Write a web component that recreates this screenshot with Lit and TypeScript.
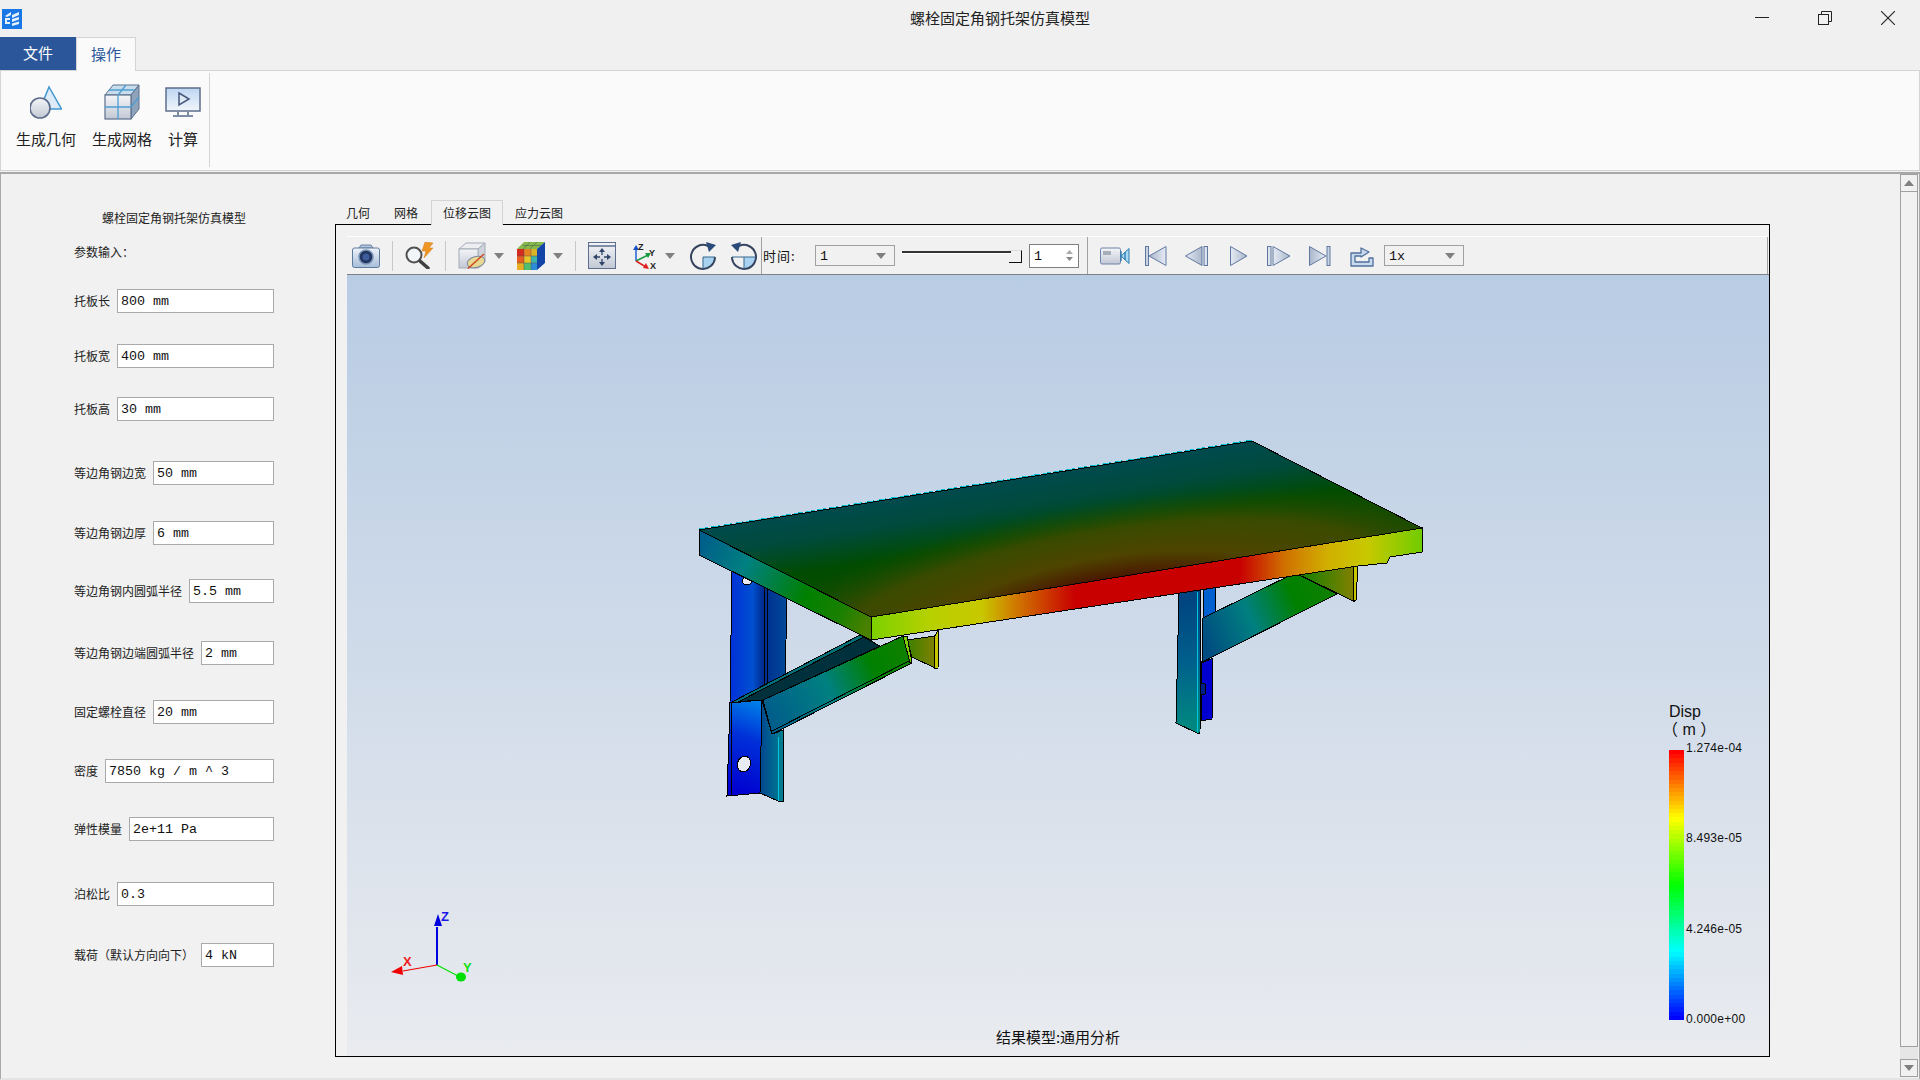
import { LitElement, html, css, svg } from "lit";
import { customElement } from "lit/decorators.js";

interface Param { label: string; value: string; gap: number; }

const PARAMS: Param[] = [
  { label: "托板长", value: "800 mm", gap: 29 },
  { label: "托板宽", value: "400 mm", gap: 31 },
  { label: "托板高", value: "30 mm", gap: 29 },
  { label: "等边角钢边宽", value: "50 mm", gap: 40 },
  { label: "等边角钢边厚", value: "6 mm", gap: 36 },
  { label: "等边角钢内圆弧半径", value: "5.5 mm", gap: 34 },
  { label: "等边角钢边端圆弧半径", value: "2 mm", gap: 38 },
  { label: "固定螺栓直径", value: "20 mm", gap: 35 },
  { label: "密度", value: "7850 kg / m ^ 3", gap: 35 },
  { label: "弹性模量", value: "2e+11 Pa", gap: 34 },
  { label: "泊松比", value: "0.3", gap: 41 },
  { label: "载荷（默认方向向下）", value: "4 kN", gap: 37 },
];

function jet(t: number): string {
  const stops: [number, number[]][] = [
    [0, [0, 0, 255]], [0.25, [0, 255, 255]], [0.5, [0, 255, 0]], [0.75, [255, 255, 0]], [1, [255, 0, 0]],
  ];
  for (let i = 0; i < stops.length - 1; i++) {
    const [a, ca] = stops[i];
    const [b, cb] = stops[i + 1];
    if (t <= b) {
      const f = (t - a) / (b - a);
      const c = ca.map((v, k) => Math.round(v + (cb[k] - v) * f));
      return `rgb(${c[0]},${c[1]},${c[2]})`;
    }
  }
  return "rgb(255,0,0)";
}

const BANDS = 64;
const barGradient = (() => {
  const parts: string[] = [];
  for (let i = 0; i < BANDS; i++) {
    const t = 1 - i / (BANDS - 1);
    parts.push(`${jet(t)} ${(i / BANDS) * 100}% ${((i + 1) / BANDS) * 100}%`);
  }
  return `linear-gradient(to bottom, ${parts.join(",")})`;
})();

const sharedDefs = svg`
  <linearGradient id="gBlue" x1="0" y1="0" x2="0" y2="1"><stop offset="0" stop-color="#eef3f9"/><stop offset="1" stop-color="#a6bcd8"/></linearGradient>
  <linearGradient id="gGray" x1="0" y1="0" x2="0" y2="1"><stop offset="0" stop-color="#f4f5f8"/><stop offset="1" stop-color="#c2c8d4"/></linearGradient>
  <linearGradient id="gTri" x1="0" y1="0" x2="1" y2="0"><stop offset="0" stop-color="#e6ecf5"/><stop offset="1" stop-color="#a9b6cb"/></linearGradient>
  <linearGradient id="gTriR" x1="1" y1="0" x2="0" y2="0"><stop offset="0" stop-color="#e6ecf5"/><stop offset="1" stop-color="#a9b6cb"/></linearGradient>
  <linearGradient id="gScreen" x1="0" y1="0" x2="0" y2="1"><stop offset="0" stop-color="#bcd6f2"/><stop offset="1" stop-color="#f2f6fb"/></linearGradient>
`;

const icons = {
  geometry: html`<svg width="32" height="34" viewBox="0 0 32 34">
    <path d="M19 2 L31.500 24 L10 24 Z" fill="#dcebf7" stroke="#3f98cf" stroke-width="1.500"/>
    <circle cx="10" cy="23" r="10" fill="url(#gGray)" stroke="#5a6a88" stroke-width="1.600"/>
  </svg>`,
  mesh: html`<svg width="36" height="36" viewBox="0 0 36 36">
    <path d="M1 11 L9 1 L35 1 L27 11 Z" fill="#c9dcec" stroke="#5c708c"/>
    <path d="M27 11 L35 1 L35 25 L27 35 Z" fill="#8ea2ba" stroke="#5c708c"/>
    <rect x="1" y="11" width="26" height="24" fill="url(#gGray)" stroke="#5c708c" stroke-width="1.200"/>
    <path d="M14 11 V35 M1 23 H27 M14 11 L22 1 M5 6 H31 M27 23 L35 13" stroke="#4f9fd4" stroke-width="1.300" fill="none"/>
  </svg>`,
  calc: html`<svg width="36" height="30" viewBox="0 0 36 30">
    <rect x="1" y="1" width="34" height="23" fill="url(#gScreen)" stroke="#5c6e8c" stroke-width="1.500"/>
    <path d="M14 6 L24 12 L14 18 Z" fill="#dfe9f5" stroke="#46587c" stroke-width="1.500"/>
    <path d="M13 24 V28 M23 24 V28" stroke="#7d8ba3" stroke-width="2"/>
    <path d="M8 29 H28" stroke="#56688a" stroke-width="1.500"/>
  </svg>`,
  camera: html`<svg width="28" height="24" viewBox="0 0 28 24">
    <path d="M7 4 L9 1 H19 L21 4 Z" fill="#b4c6dc" stroke="#6a83a6"/>
    <rect x="0.500" y="4" width="27" height="19.500" rx="2" fill="url(#gBlue)" stroke="#5d7a9c"/>
    <circle cx="14" cy="13" r="7" fill="#22355e" stroke="#7a93b8" stroke-width="1.500"/>
    <circle cx="14" cy="13" r="3.500" fill="#3c5c9c"/>
  </svg>`,
  search: html`<svg width="30" height="27" viewBox="0 0 30 27">
    <path d="M21 0 L29 1 L25 6 L29 6 L20 16 L22 9 L18 9 Z" fill="#ef9524" stroke="#d07a18" stroke-width=".5"/>
    <circle cx="10" cy="13" r="7.500" fill="#f2f5f8" stroke="#505050" stroke-width="2"/>
    <path d="M16 19 L24 26" stroke="#404040" stroke-width="3.500" stroke-linecap="round"/>
  </svg>`,
  cube: html`<svg width="28" height="27" viewBox="0 0 28 27">
    <path d="M1 7 L8 1 L27 1 L20 7 Z" fill="#eceef2" stroke="#a4acb8"/>
    <path d="M20 7 L27 1 L27 20 L20 26 Z" fill="#cfd4dc" stroke="#a4acb8"/>
    <rect x="1" y="7" width="19" height="19" fill="url(#gGray)" stroke="#a4acb8"/>
    <ellipse cx="18" cy="20" rx="9" ry="5.500" transform="rotate(-15 18 20)" fill="#e9d892" stroke="#7c8aa0"/>
    <path d="M10 26.500 L26 12" stroke="#d04a22" stroke-width="1.500"/>
  </svg>`,
  rainbow: html`<svg width="28" height="28" viewBox="0 0 28 28">
    <path d="M0 7 L7 0 L28 0 L20 7 Z" fill="#86b84a"/>
    <path d="M6 3.500 H24 M13 0 L6.500 7 M20 0 L13 7" stroke="#4a6a50" stroke-width=".6"/>
    <path d="M20 7 L28 0 L28 21 L20 28 Z" fill="#1544a8"/>
    <rect x="0" y="7" width="7" height="7" fill="#d42a20"/><rect x="7" y="7" width="7" height="7" fill="#e88420"/><rect x="14" y="7" width="6" height="7" fill="#dcb428"/>
    <rect x="0" y="14" width="7" height="7" fill="#e85c20"/><rect x="7" y="14" width="7" height="7" fill="#e8c828"/><rect x="14" y="14" width="6" height="7" fill="#3cb4a8"/>
    <rect x="0" y="21" width="7" height="7" fill="#e8b020"/><rect x="7" y="21" width="7" height="7" fill="#50c070"/><rect x="14" y="21" width="6" height="7" fill="#2c8cd8"/>
    <path d="M7 7 V28 M14 7 V28 M0 14 H20 M0 21 H20" stroke="#5a5a50" stroke-width=".5"/>
  </svg>`,
  caret: html`<svg width="10" height="6" viewBox="0 0 10 6"><path d="M0 0 H10 L5 6 Z" fill="#808080"/></svg>`,
  fit: html`<svg width="28" height="27" viewBox="0 0 28 27">
    <rect x=".5" y=".5" width="27" height="26" fill="url(#gGray)" stroke="#5d6f8c"/>
    <path d="M.5 4 H27.500" stroke="#5d6f8c" stroke-width="1.500"/>
    <g fill="#2f4468">
      <path d="M14 6 L17 10 H11 Z"/><path d="M14 24 L17 20 H11 Z"/><path d="M5 15 L9 12 V18 Z"/><path d="M23 15 L19 12 V18 Z"/>
    </g>
    <path d="M14 10 V13 M14 17 V20 M9 15 H12 M16 15 H19" stroke="#2f4468" stroke-width="1.300"/>
  </svg>`,
  axes: html`<svg width="28" height="28" viewBox="0 0 28 28">
    <path d="M3 19 V6" stroke="#2060d8" stroke-width="1.500"/><path d="M3 3 L6 8 H0 Z" fill="#1850c8"/>
    <path d="M3 19 L15 13" stroke="#1a9a40" stroke-width="1.500"/><path d="M18 11 L12 11 L15 16 Z" fill="#1a9a40"/>
    <path d="M3 19 L13 25" stroke="#e02020" stroke-width="1.500"/><path d="M16 27 L10 26 L13 21 Z" fill="#e02020"/>
    <text x="5" y="8" class="ax">Z</text><text x="16" y="14" class="ax">Y</text><text x="17" y="27" class="ax">X</text>
  </svg>`,
  cw: html`<svg width="28" height="28" viewBox="0 0 28 28">
    <path d="M14 15 H26 A12 12 0 0 1 14 27 Z" fill="#a9d2f0"/>
    <path d="M19 4 A12 12 0 1 0 26 15" fill="none" stroke="#34435e" stroke-width="2"/>
    <path d="M14 15 H26 M14 15 V27" stroke="#34698f" stroke-width="1"/>
    <path d="M17 0 L27 3 L20 10 Z" fill="#2a4a78"/>
  </svg>`,
  ccw: html`<svg width="28" height="28" viewBox="0 0 28 28">
    <path d="M14 15 H26 A12 12 0 0 1 14 27 Z" fill="#a9d2f0"/>
    <path d="M9 4 A12 12 0 1 1 2 15" fill="none" stroke="#34435e" stroke-width="2"/>
    <path d="M2 15 H26 M14 15 V27" stroke="#34698f" stroke-width="1"/>
    <path d="M11 0 L1 3 L8 10 Z" fill="#2a4a78"/>
  </svg>`,
  video: html`<svg width="30" height="18" viewBox="0 0 30 18">
    <rect x=".5" y="1" width="20" height="16" rx="1.500" fill="url(#gGray)" stroke="#6d85a8"/>
    <rect x="3" y="4" width="8" height="4" fill="#a8aeb8"/>
    <path d="M21 9 L29 1.500 V16.500 Z" fill="#a8d8f4" stroke="#2a78b0"/>
    <path d="M21 4 V14 M25 5 V13" stroke="#2a78b0" stroke-width="1.300"/>
  </svg>`,
  first: html`<svg width="22" height="20" viewBox="0 0 22 20">
    <rect x=".5" y=".5" width="3" height="19" fill="#c8d4e4" stroke="#6078a0"/>
    <path d="M21 .5 V19.500 L4 10 Z" fill="url(#gTriR)" stroke="#6078a0"/>
  </svg>`,
  prev: html`<svg width="23" height="20" viewBox="0 0 23 20">
    <path d="M17 .5 V19.500 L.5 10 Z" fill="url(#gTri)" stroke="#6078a0"/>
    <rect x="19" y=".5" width="3.500" height="19" fill="#dbe3ee" stroke="#6078a0"/>
  </svg>`,
  play: html`<svg width="18" height="20" viewBox="0 0 18 20"><path d="M.5 .5 V19.500 L17 10 Z" fill="url(#gTri)" stroke="#6078a0"/></svg>`,
  next: html`<svg width="24" height="20" viewBox="0 0 24 20">
    <rect x=".5" y=".5" width="3.500" height="19" fill="#dbe3ee" stroke="#6078a0"/>
    <path d="M6 .5 V19.500 L23 10 Z" fill="url(#gTri)" stroke="#6078a0"/>
  </svg>`,
  last: html`<svg width="22" height="20" viewBox="0 0 22 20">
    <path d="M.5 .5 V19.500 L17 10 Z" fill="url(#gTriR)" stroke="#6078a0"/>
    <rect x="18" y=".5" width="3" height="19" fill="#c8d4e4" stroke="#6078a0"/>
  </svg>`,
  exportIcon: html`<svg width="24" height="22" viewBox="0 0 24 22">
    <path d="M1 8 H11 V3 L19 7 L11 12 V11 H5 V17 H19 V13 H23 V21 H1 Z" fill="#c8daee" stroke="#4f6f9c" stroke-width="1.300" stroke-linejoin="round"/>
  </svg>`,
};

const modelDefs = svg`
  <linearGradient id="mFront" gradientUnits="userSpaceOnUse" x1="871" y1="0" x2="1422" y2="0">
    <stop offset="0" stop-color="#7cd000"/><stop offset=".11" stop-color="#b8d000"/><stop offset=".2" stop-color="#c8c800"/>
    <stop offset=".26" stop-color="#d07c00"/><stop offset=".32" stop-color="#cc3800"/><stop offset=".37" stop-color="#c80000"/>
    <stop offset=".67" stop-color="#c80000"/><stop offset=".75" stop-color="#d07000"/><stop offset=".83" stop-color="#d0b000"/>
    <stop offset=".9" stop-color="#c8c800"/><stop offset="1" stop-color="#70cc00"/>
  </linearGradient>
  <linearGradient id="mLeft" gradientUnits="userSpaceOnUse" x1="699" y1="530" x2="871" y2="617">
    <stop offset="0" stop-color="#005a8c"/><stop offset=".3" stop-color="#008080"/><stop offset=".65" stop-color="#008000"/><stop offset=".85" stop-color="#1a8000"/><stop offset="1" stop-color="#4a8000"/>
  </linearGradient>
  <linearGradient id="mTop" gradientUnits="userSpaceOnUse" x1="965" y1="475" x2="985" y2="605">
    <stop offset="0" stop-color="#004a55"/><stop offset=".3" stop-color="#004a3c"/><stop offset=".55" stop-color="#004c00"/><stop offset="1" stop-color="#144c00"/>
  </linearGradient>
  <radialGradient id="mHot" gradientUnits="objectBoundingBox" cx=".5" cy=".5" r=".5">
    <stop offset="0" stop-color="#4a0000"/><stop offset=".2" stop-color="#4a1000"/><stop offset=".45" stop-color="#4e4400"/>
    <stop offset=".72" stop-color="#4a4a00" stop-opacity=".75"/><stop offset="1" stop-color="#204c00" stop-opacity="0"/>
  </radialGradient>
  <linearGradient id="mBraceL" gradientUnits="userSpaceOnUse" x1="763" y1="720" x2="910" y2="650">
    <stop offset="0" stop-color="#005a8c"/><stop offset=".45" stop-color="#008080"/><stop offset=".75" stop-color="#008000"/><stop offset="1" stop-color="#108000"/>
  </linearGradient>
  <linearGradient id="mBraceR" gradientUnits="userSpaceOnUse" x1="1203" y1="640" x2="1330" y2="585">
    <stop offset="0" stop-color="#004c80"/><stop offset=".38" stop-color="#008080"/><stop offset=".72" stop-color="#008000"/><stop offset="1" stop-color="#108000"/>
  </linearGradient>
  <linearGradient id="mGussetL" gradientUnits="userSpaceOnUse" x1="907" y1="0" x2="935" y2="0">
    <stop offset="0" stop-color="#3c8000"/><stop offset="1" stop-color="#808000"/>
  </linearGradient>
  <linearGradient id="mGussetR" gradientUnits="userSpaceOnUse" x1="1295" y1="0" x2="1353" y2="0">
    <stop offset="0" stop-color="#088000"/><stop offset="1" stop-color="#808000"/>
  </linearGradient>
  <linearGradient id="mPostTop" gradientUnits="userSpaceOnUse" x1="730" y1="0" x2="787" y2="0">
    <stop offset="0" stop-color="#0030d8"/><stop offset=".4" stop-color="#0050d0"/><stop offset=".58" stop-color="#002c90"/><stop offset="1" stop-color="#004a98"/>
  </linearGradient>
  <linearGradient id="mPostLow" gradientUnits="userSpaceOnUse" x1="730" y1="790" x2="765" y2="705">
    <stop offset="0" stop-color="#0000d0"/><stop offset=".6" stop-color="#0030d8"/><stop offset="1" stop-color="#0080e8"/>
  </linearGradient>
  <linearGradient id="mFlange" gradientUnits="userSpaceOnUse" x1="762" y1="0" x2="783" y2="0">
    <stop offset="0" stop-color="#004a90"/><stop offset="1" stop-color="#007f90"/>
  </linearGradient>
  <linearGradient id="mPostR" gradientUnits="userSpaceOnUse" x1="1180" y1="600" x2="1200" y2="725">
    <stop offset="0" stop-color="#004480"/><stop offset=".5" stop-color="#00608c"/><stop offset="1" stop-color="#008880"/>
  </linearGradient>
`;

const model = svg`
  <g stroke="#000" stroke-width="1" shape-rendering="crispEdges" stroke-linejoin="miter">
    <path d="M732 570 L787 598 L786 640 L785 678 L730 703 Z" fill="url(#mPostTop)"/>
    <path d="M764 585 V690 M767 586 V688" fill="none"/>
    <ellipse cx="747" cy="581" rx="5" ry="4" fill="#e8ecf2"/>
    <path d="M730 703 L762 700 L760 793 L727 796 Z" fill="url(#mPostLow)"/>
    <path d="M762 700 L772 734 L783 730 L783 801 L778 801 L760 793 Z" fill="url(#mFlange)"/>
    <path d="M778 737 V801" stroke="#00c8e0" fill="none"/>
    <path d="M731 703 V795" fill="none"/>
    <ellipse cx="744" cy="764" rx="6.500" ry="8" transform="rotate(18 744 764)" fill="#e8ecf2"/>
    <path d="M907 640 L935 636 L935 668 L912 657 Z" fill="url(#mGussetL)"/>
    <path d="M934 637 L939 629 L938 668 L935 669 Z" fill="#c8c800"/>
    <path d="M732 702 L860 635 L880 646 L763 700 Z" fill="#00303c"/>
    <path d="M732 702 L860 635 L864 637 L738 702 Z" fill="#007078"/>
    <path d="M763 700 L903 636 L912 663 L772 734 Z" fill="url(#mBraceL)"/>
    <path d="M772 731 L911 660" fill="none"/>
    <path d="M903 636 L907 636 L912 662 L910 663 Z" fill="#80d000"/>
    <path d="M1203 587 L1216 586 L1215 617 L1203 620 Z" fill="#0060d0"/>
    <path d="M1202 663 L1213 658 L1212 719 L1201 721 Z" fill="#0000d0"/>
    <path d="M1179 592 L1201 588 L1200 733 L1197 733 L1176 723 Z" fill="url(#mPostR)"/>
    <path d="M1197 592 V733" stroke="#00c8e0" fill="none"/>
    <ellipse cx="1203" cy="689" rx="3" ry="6" fill="#002080"/>
    <path d="M1295 573 L1353 563 L1353 601 L1337 593 Z" fill="url(#mGussetR)"/>
    <path d="M1353 563 L1358 565 L1356 600 L1353 602 Z" fill="#c8c800"/>
    <path d="M1203 618 L1295 573 L1337 594 L1202 662 Z" fill="url(#mBraceR)"/>
    <path d="M699 530 L871 617 L871 640 L699 555 Z" fill="url(#mLeft)"/>
    <path d="M871 617 L1422 528 L1422 552 L1390 557 L1387 563 L1358 566 L871 640 Z" fill="url(#mFront)"/>
    <path d="M699 530 L1252 441 L1422 528 L871 617 Z" fill="url(#mTop)"/>
  </g>
  <clipPath id="topClip"><path d="M699 530 L1252 441 L1422 528 L871 617 Z"/></clipPath>
  <g clip-path="url(#topClip)">
    <ellipse cx="1110" cy="602" rx="380" ry="100" transform="rotate(-9 1110 602)" fill="url(#mHot)"/>
  </g>
  <path d="M699 530 L871 617 L1422 528" fill="none" stroke="#000" shape-rendering="crispEdges"/>
  <path d="M699 530 L1252 441" stroke="#000" shape-rendering="crispEdges" fill="none"/>
  <path d="M699 529 L1252 440" stroke="#00c0d0" stroke-dasharray="9 3" shape-rendering="crispEdges" fill="none"/>
  <path d="M1252 441 L1422 528" stroke="#000" shape-rendering="crispEdges" fill="none"/>
`;

const triad = svg`
  <path d="M437 965 V927" stroke="#0000e0" stroke-width="1.200" shape-rendering="crispEdges"/>
  <path d="M438 914 L442 926 L434 926 Z" fill="#0000e0"/>
  <path d="M437 965 L403 971" stroke="#f00000" stroke-width="1.200"/>
  <path d="M391 972 L402 966 L403 975 Z" fill="#f00000"/>
  <path d="M437 965 L458 976" stroke="#00e000" stroke-width="1.200"/>
  <ellipse cx="461" cy="977" rx="5" ry="4.500" fill="#00e000"/>
  <text x="441" y="921" class="tri" fill="#1818e8">Z</text>
  <text x="403" y="966" class="tri" fill="#f02020">X</text>
  <text x="463" y="972" class="tri" fill="#10e010">Y</text>
`;

@customElement("app-root")
export class AppRoot extends LitElement {
  static styles = css`
    :host { display: block; width: 1920px; height: 1080px; overflow: hidden; background: #f0f0f0; color: #111;
      font-family: "Noto Sans CJK SC", "Liberation Sans", sans-serif; }
    * { box-sizing: border-box; }
    .defs { position: absolute; width: 0; height: 0; }
    .app { display: flex; flex-direction: column; height: 1080px; }

    .titlebar { height: 37px; flex: none; display: flex; align-items: center; }
    .logo { margin: 1px 0 0 2px; display: block; flex: none; }
    .title { flex: 1; text-align: center; font-size: 15px; line-height: 20px; padding-left: 58px; margin-top: -2px; color: #222; }
    .winbtns { display: flex; width: 140px; flex: none; margin-right: 25px; margin-left: -165px; justify-content: space-between; align-items: center; margin-top: -2px; }
    .winbtns svg { display: block; }

    .menutabs { height: 33px; flex: none; display: flex; }
    .mt { font-size: 15px; line-height: 32px; text-align: center; }
    .mt.file { width: 76px; background: #2b579a; color: #fff; }
    .mt.op { width: 60px; height: 34px; background: #fafafa; color: #2b579a; border: 1px solid #d4d4d4; border-bottom: none; position: relative; z-index: 1; }

    .ribbon { height: 101px; flex: none; background: #fafafa; border: 1px solid #d4d4d4; display: flex; }
    .rgroup { width: 209px; margin: 2px 0 3px; padding: 9px 0 0 15px; border-right: 1px solid #d4d4d4; display: flex; gap: 16px; }
    .rbtn { display: flex; flex-direction: column; align-items: center; }
    .ricon { height: 40px; width: 30px; display: flex; align-items: center; justify-content: center; }
    .ricon svg { flex: none; }
    .rlabel { font-size: 15px; line-height: 20px; margin-top: 7px; white-space: nowrap; color: #222; }

    .main { flex: 1; margin-top: 1px; border-top: 2px solid #a8a8a8; border-left: 1px solid #a8a8a8; border-right: 1px solid #a8a8a8; border-bottom: 2px solid #e4e4e4; display: flex; min-height: 0; background: #f1f1f1; }

    .params { width: 334px; flex: none; padding: 36px 0 0 73px; }
    .params > .inner { width: 200px; }
    .ptitle { font-size: 12px; line-height: 16px; text-align: center; color: #222; }
    .psub { font-size: 12px; line-height: 16px; margin-top: 18px; color: #222; }
    .prow { display: flex; align-items: center; height: 24px; }
    .plabel { font-size: 12px; margin-right: 7px; white-space: nowrap; color: #222; line-height: 16px; }
    .pinput { flex: 1; height: 24px; background: #fff; border: 1px solid #aaa; padding: 2px 0 0 3px;
      font-family: "Liberation Mono", monospace; font-size: 13.33px; line-height: 20px; white-space: pre; color: #111; }

    .viewer { width: 1435px; flex: none; padding-top: 26px; display: flex; flex-direction: column; }
    .vtabs { display: flex; height: 24px; margin-left: -1px; position: relative; z-index: 1; }
    .vt { font-size: 12px; line-height: 25px; padding: 0 12px; color: #222; white-space: nowrap; }
    .vt.sel { height: 25px; margin-left: 1px; padding: 0 11px; border: 1px solid #d4d4d4; border-bottom: none; background: #f1f1f1; line-height: 24px; }
    .frame { width: 1435px; height: 833px; border: 1px solid #000; padding: 11px 0 0 11px; display: flex; flex-direction: column; }

    .toolbar { height: 39px; flex: none; border-top: 1px solid #fff; border-bottom: 1px solid #808080; padding-left: 5px; display: grid; align-items: center;
      grid-template-columns: 40px 12px 41px 13px 36px 23px 36px 22px 13px 45px 32px 24px 41px 31px 2px 52px 87px 127px 58px 13px 45px 40px 45px 37px 42px 41px 34px 383px 1fr; }
    .toolbar svg { display: block; }
    .toolbar .ax { font: bold 9px "Liberation Sans", sans-serif; fill: #222; }
    .sep { width: 1px; height: 30px; background: #c8c8c8; }
    .sep.full { align-self: stretch; height: auto; background: #a0a0a0; }
    .sep.end { justify-self: end; margin-right: 2px; }
    .timelbl { font-size: 13px; letter-spacing: 1px; color: #111; white-space: nowrap; }
    .combo { width: 80px; height: 21px; border: 1px solid #a0a0a0; background: #f1f1f1; display: flex; align-items: center; justify-content: space-between; padding: 0 8px 0 4px;
      font-family: "Liberation Mono", monospace; font-size: 13.33px; color: #111; }
    .combo span, .spin > span:first-child { margin-top: 2px; }
    .slider { width: 120px; height: 14px; position: relative; margin-top: 2px; }
    .slider .line { height: 2px; background: #333; margin-right: 11px; box-shadow: 0 1px 0 #fff; margin-top: 1px; }
    .slider .thumb { position: absolute; right: 0; top: 0; width: 13px; height: 13px; border-right: 1px solid #111; border-bottom: 1px solid #111; border-top: 1px solid #ddd; }
    .spin { width: 50px; height: 24px; border: 1px solid #808080; background: #fff; display: flex; align-items: center; justify-content: space-between; padding: 0 5px 0 4px;
      font-family: "Liberation Mono", monospace; font-size: 13.33px; color: #111; }
    .spinarrows { display: flex; flex-direction: column; gap: 3px; }

    .canvas { flex: 1; position: relative; background: linear-gradient(to bottom, #b8cce4, #e9ebef); min-height: 0; overflow: hidden; }
    .scene { position: absolute; inset: 0; width: 100%; height: 100%; display: block; }
    .scene .tri { font: bold 13px "Liberation Sans", sans-serif; }
    .caption { position: absolute; left: 0; right: 0; bottom: 9px; text-align: center; font-size: 15px; line-height: 20px; color: #111; }
    .legend { position: absolute; left: 1322px; top: 428px; width: 110px; height: 350px; }
    .ltitle { font: 16px/18px "Liberation Sans", "Noto Sans CJK SC", sans-serif; color: #111; }
    .lunit { font: 16px/18px "Liberation Sans", "Noto Sans CJK SC", sans-serif; color: #111; margin: 0 0 11px -7px; white-space: pre; }
    .lbody { display: flex; gap: 2px; height: 270px; }
    .lbar { width: 15px; height: 270px; flex: none; }
    .lticks { display: flex; flex-direction: column; justify-content: space-between; height: 285px; margin-top: -9px; font: 12px/14px "Liberation Sans", sans-serif; letter-spacing: .25px; color: #111; }

    .scrollbar { width: 18px; flex: none; margin-left: 130px; display: flex; flex-direction: column; padding-bottom: 1px; }
    .sbtn { height: 18px; flex: none; border: 1px solid #a0a0a0; display: flex; align-items: center; justify-content: center; background: #f1f1f1; }
    .strack { flex: 1; border: 1px solid #a0a0a0; border-top: none; }
    .sgap { height: 12px; flex: none; background: #e6e6e6; }
  `;

  render() {
    return html`
      <svg class="defs" aria-hidden="true"><defs>${sharedDefs}${modelDefs}</defs></svg>
      <div class="app">
        <div class="titlebar">
          <svg class="logo" width="20" height="20" viewBox="0 0 20 20">
            <rect width="20" height="20" fill="#1a78e6"/>
            <path d="M3 7 L9 3 L9 6 L5 8 Z M3 9 H8 V11 H5 V13 H8 V15 H3 Z M10 6 L17 3 V6 L10 9 Z M10 10 L17 8 V10.500 L10 13 Z M10 14.500 L17 12.500 V15 L10 17 Z" fill="#e6f1fd"/>
          </svg>
          <div class="title">螺栓固定角钢托架仿真模型</div>
          <div class="winbtns">
            <svg width="14" height="14" viewBox="0 0 14 14"><path d="M0 6.500 H14" stroke="#222" stroke-width="1"/></svg>
            <svg width="14" height="14" viewBox="0 0 14 14"><rect x=".5" y="3.500" width="10" height="10" fill="none" stroke="#222"/><path d="M3.500 3.500 V.5 H13.500 V10.500 H10.500" fill="none" stroke="#222"/></svg>
            <svg width="14" height="14" viewBox="0 0 14 14"><path d="M0 0 L14 14 M14 0 L0 14" stroke="#222" stroke-width="1.100"/></svg>
          </div>
        </div>
        <div class="menutabs">
          <div class="mt file">文件</div>
          <div class="mt op">操作</div>
        </div>
        <div class="ribbon">
          <div class="rgroup">
            <div class="rbtn"><div class="ricon">${icons.geometry}</div><div class="rlabel">生成几何</div></div>
            <div class="rbtn"><div class="ricon">${icons.mesh}</div><div class="rlabel">生成网格</div></div>
            <div class="rbtn"><div class="ricon">${icons.calc}</div><div class="rlabel">计算</div></div>
          </div>
        </div>
        <div class="main">
          <div class="params">
            <div class="inner">
              <div class="ptitle">螺栓固定角钢托架仿真模型</div>
              <div class="psub">参数输入：</div>
              ${PARAMS.map((p) => html`
                <div class="prow" style="margin-top:${p.gap}px">
                  <div class="plabel">${p.label}</div>
                  <div class="pinput">${p.value}</div>
                </div>`)}
            </div>
          </div>
          <div class="viewer">
            <div class="vtabs">
              <div class="vt">几何</div>
              <div class="vt">网格</div>
              <div class="vt sel">位移云图</div>
              <div class="vt">应力云图</div>
            </div>
            <div class="frame">
              <div class="toolbar">
                ${icons.camera}<div class="sep"></div>${icons.search}<div class="sep"></div>
                ${icons.cube}${icons.caret}${icons.rainbow}${icons.caret}<div class="sep"></div>
                ${icons.fit}${icons.axes}${icons.caret}${icons.cw}${icons.ccw}<div class="sep full"></div>
                <div class="timelbl">时间:</div>
                <div class="combo"><span>1</span>${icons.caret}</div>
                <div class="slider"><div class="line"></div><div class="thumb"></div></div>
                <div class="spin"><span>1</span>
                  <span class="spinarrows">
                    <svg width="7" height="4" viewBox="0 0 7 4"><path d="M0 4 H7 L3.500 0 Z" fill="#aaa"/></svg>
                    <svg width="7" height="4" viewBox="0 0 7 4"><path d="M0 0 H7 L3.500 4 Z" fill="#888"/></svg>
                  </span>
                </div>
                <div class="sep full"></div>
                ${icons.video}${icons.first}${icons.prev}${icons.play}${icons.next}${icons.last}${icons.exportIcon}
                <div class="combo"><span>1x</span>${icons.caret}</div>
                <div class="sep full end"></div>
              </div>
              <div class="canvas">
                <svg class="scene" viewBox="347 275 1422 781" preserveAspectRatio="none">
                  ${model}${triad}
                </svg>
                <div class="caption">结果模型:通用分析</div>
                <div class="legend">
                  <div class="ltitle">Disp</div>
                  <div class="lunit">（ m ）</div>
                  <div class="lbody">
                    <div class="lbar" style="background:${barGradient}"></div>
                    <div class="lticks">
                      <span>1.274e-04</span><span>8.493e-05</span><span>4.246e-05</span><span>0.000e+00</span>
                    </div>
                  </div>
                </div>
              </div>
            </div>
          </div>
          <div class="scrollbar">
            <div class="sbtn"><svg width="10" height="6" viewBox="0 0 10 6"><path d="M0 6 H10 L5 0 Z" fill="#808080"/></svg></div>
            <div class="strack"></div>
            <div class="sgap"></div>
            <div class="sbtn"><svg width="10" height="6" viewBox="0 0 10 6"><path d="M0 0 H10 L5 6 Z" fill="#808080"/></svg></div>
          </div>
        </div>
      </div>
    `;
  }
}
